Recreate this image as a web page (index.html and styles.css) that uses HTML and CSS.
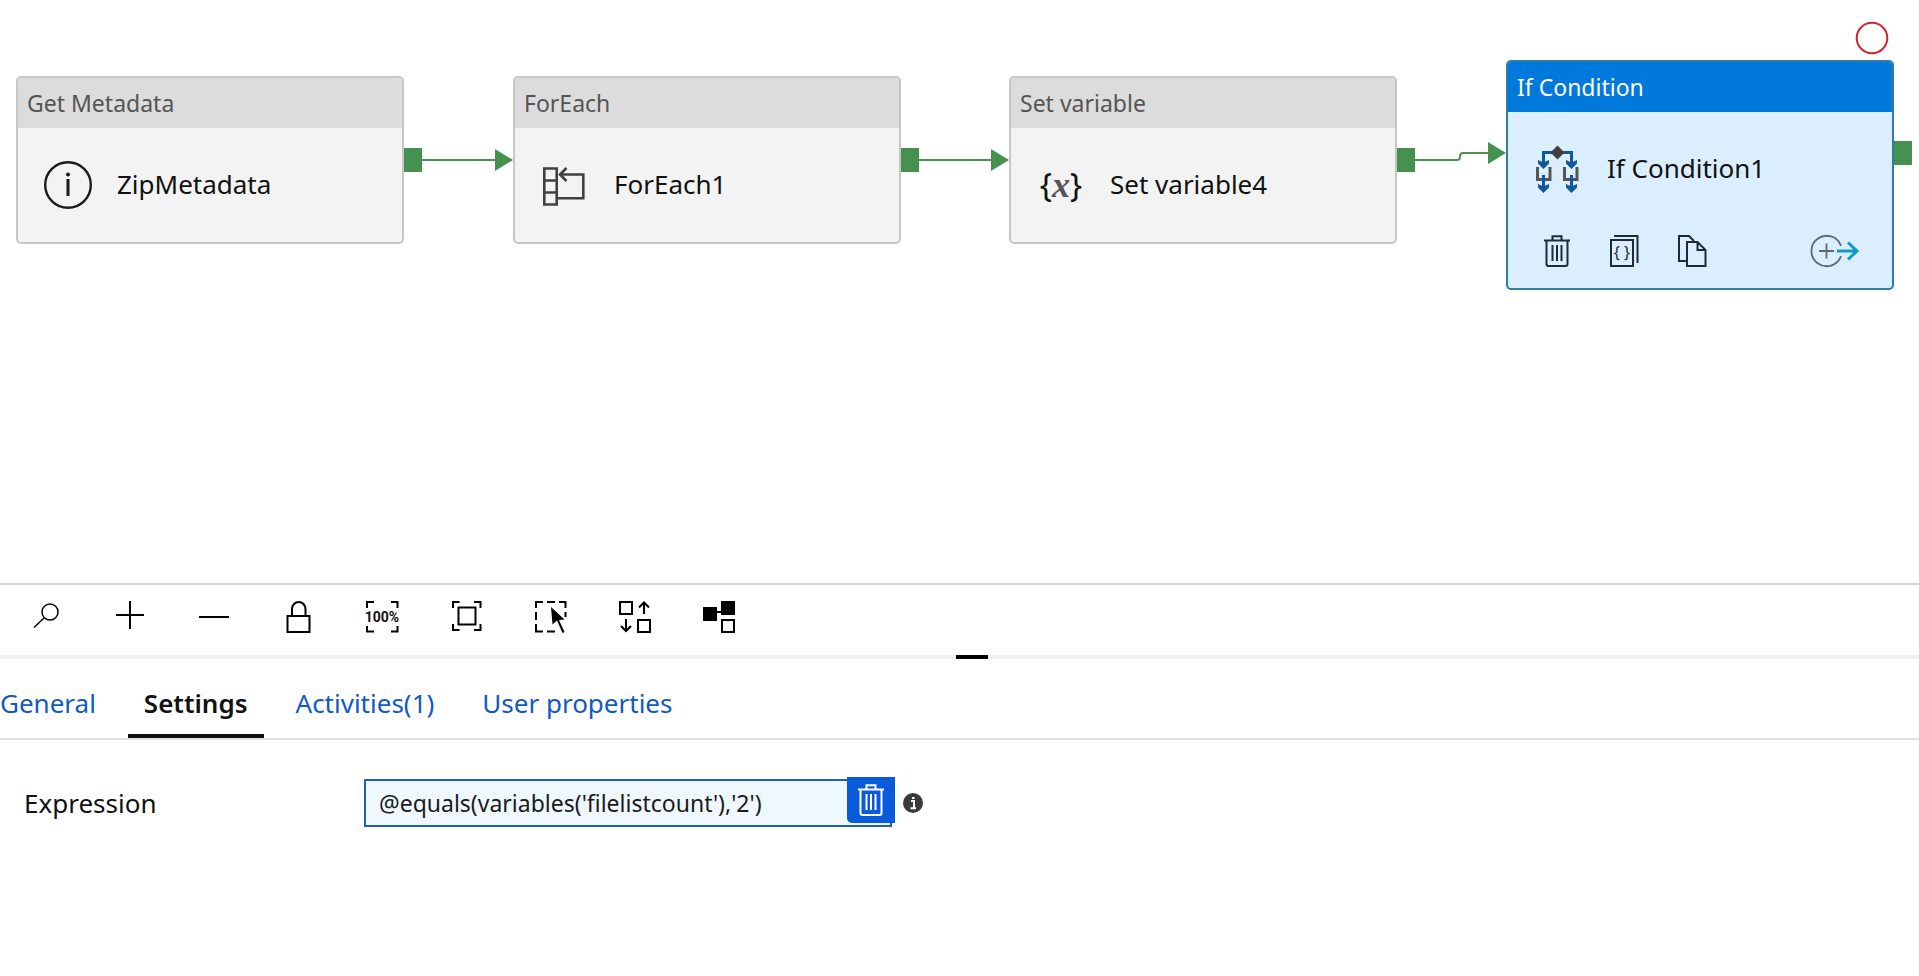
FILE: index.html
```html
<!DOCTYPE html>
<html lang="en">
<head>
<meta charset="utf-8">
<title>Pipeline designer</title>
<link rel="stylesheet" href="styles.css">
</head>
<body>
<main class="designer">
  <section class="canvas" aria-label="Pipeline canvas">
    <svg class="links" width="1919" height="300" aria-hidden="true">
      <g class="link-line">
        <path d="M422 160H496"/>
        <path d="M918 160H992"/>
        <path d="M1414 160H1457Q1460 160 1460 156.500T1463 153H1490"/>
      </g>
      <g class="link-shape">
        <path d="M404 148h18v24h-18zM901 148h18v24h-18zM1397 148h18v24h-18zM1894 141h18v24h-18z"/>
        <path d="M495 149l18 11-18 11zM991 149l18 11-18 11zM1488 142l18 11-18 11z"/>
      </g>
      <circle class="breakpoint" cx="1872" cy="38" r="15.300"/>
    </svg>

    <article class="node node-metadata">
      <header class="node-type">Get Metadata</header>
      <div class="node-body">
        <svg class="node-icon" width="48" height="48" viewBox="0 0 48 48" aria-hidden="true">
          <circle cx="24" cy="24" r="22.800" fill="none" stroke="#1b1b1b" stroke-width="2.400"/>
          <path d="M24 18v17" stroke="#1b1b1b" stroke-width="3"/>
          <circle cx="24" cy="13.500" r="2" fill="#1b1b1b"/>
        </svg>
        <span class="node-name">ZipMetadata</span>
      </div>
    </article>

    <article class="node node-foreach">
      <header class="node-type">ForEach</header>
      <div class="node-body">
        <svg class="node-icon" width="48" height="48" viewBox="1 0 48 48" fill="none" stroke="#404040" stroke-width="2.600" aria-hidden="true">
          <path d="M4.300 7.500h12.400v36H4.300zM4.300 19.500h12.400M4.300 31.500h12.400M18 37.300h25.300V13.500H20"/>
          <path d="M26.500 7L20 13.500l6.500 6.500"/>
        </svg>
        <span class="node-name">ForEach1</span>
      </div>
    </article>

    <article class="node node-variable">
      <header class="node-type">Set variable</header>
      <div class="node-body">
        <span class="node-icon variable-icon" aria-hidden="true">{<i>x</i>}</span>
        <span class="node-name">Set variable4</span>
      </div>
    </article>

    <article class="node node-if selected">
      <header class="node-type">If Condition</header>
      <div class="node-body">
        <svg class="node-icon" width="48" height="48" viewBox="2 0 48 48" fill="none" aria-hidden="true">
          <g stroke="#555" stroke-width="3">
            <path d="M5.500 22v12.500h12.500V22M32.500 22v12.500H45V22"/>
          </g>
          <g stroke="#11579b" stroke-width="3">
            <path d="M23 7.500H11.500V20M27 7.500h12.500V20M11.500 30v15M39.500 30v15"/>
          </g>
          <path d="M6 15l5.500 2.500L17 15v3.500L11.500 24 6 18.500zM34 15l5.500 2.500L45 15v3.500L39.500 24 34 18.500zM6 39l5.500 2.500L17 39v3.500L11.500 48 6 42.500zM34 39l5.500 2.500L45 39v3.500L39.500 48 34 42.500z" fill="#11579b"/>
          <path d="M25.500.500l7 7-7 7-7-7z" fill="#404040"/>
        </svg>
        <span class="node-name">If Condition1</span>
      </div>
      <div class="node-actions">
        <button class="icon-button" type="button" aria-label="Delete">
          <svg width="36" height="36" viewBox="0 0 36 36" fill="none" stroke="#1f2a33" stroke-width="2">
            <path d="M5 7.500h26M13.500 7V3.200h9V7M7.500 8v23q0 2 2 2h17q2 0 2-2V8M13.500 12v16M18 12v16M22.500 12v16"/>
          </svg>
        </button>
        <button class="icon-button" type="button" aria-label="View code">
          <svg width="36" height="36" viewBox="1 0 36 36" fill="none" stroke="#1f2a33" stroke-width="2">
            <path d="M5 7h22v26H5zM8 3h23.500v27"/>
            <text class="code-glyph" x="16" y="25" text-anchor="middle">{ }</text>
          </svg>
        </button>
        <button class="icon-button" type="button" aria-label="Clone">
          <svg width="36" height="36" viewBox="1 0 36 36" fill="none" stroke="#1f2a33" stroke-width="2">
            <path d="M13 28H5V3h10l5 5M13 9h10.500l8 8v16H13zM23.500 9v8h8"/>
          </svg>
        </button>
        <button class="icon-button add-output" type="button" aria-label="Add output">
          <svg width="52" height="36" viewBox="1 0 52 36" fill="none" stroke="#5b6875" stroke-width="1.800">
            <path d="M34 13A15.200 15.200 0 1 0 34 23M12 18h15M19.500 10.500v15"/>
            <path d="M30 18h20M41 9.500l9 8.500-9 8.500" stroke="#129bc2" stroke-width="3"/>
          </svg>
        </button>
      </div>
    </article>
  </section>

  <div class="toolbar" role="toolbar" aria-label="Canvas tools">
    <button class="tool" type="button" aria-label="Search"><svg class="tool-icon thin" viewBox="0 0 36 36"><circle cx="22" cy="13" r="8"/><path d="M16 19L6 28.500"/></svg></button>
    <button class="tool" type="button" aria-label="Zoom in"><svg class="tool-icon" viewBox="0 0 36 36"><path d="M4 16h28M18 2v28"/></svg></button>
    <button class="tool" type="button" aria-label="Zoom out"><svg class="tool-icon" viewBox="0 0 36 36"><path d="M3 18h30"/></svg></button>
    <button class="tool" type="button" aria-label="Lock canvas"><svg class="tool-icon" viewBox="0 0 36 36"><path d="M7.500 17h22v16h-22zM12 17V10a6.700 7 0 0 1 13.500 0v7"/></svg></button>
    <button class="tool" type="button" aria-label="Reset zoom to 100%"><svg class="tool-icon" viewBox="0 0 36 36"><path d="M3 9V3h7M27 3h6.500v6M3 27v5.500h7M27 32.500h6.500V27"/><text class="zoom-label" x="18" y="22.500" text-anchor="middle">100%</text></svg></button>
    <button class="tool" type="button" aria-label="Zoom to fit"><svg class="tool-icon" viewBox="0 0 36 36"><path d="M5 9V3h6.500M26 3h6.500v6M5 25v6h6.500M26 31h6.500v-6"/><path d="M10.500 8.500h17v17h-17z"/></svg></button>
    <button class="tool" type="button" aria-label="Select area"><svg class="tool-icon" viewBox="0 0 36 36"><path d="M4 9V3h7M15 3h8M27 3h6.500v6M4 13v8M4 25v7.500h7M15 32.500h8M33.500 13v5"/><path class="solid" d="M19 8l1.500 17.500 4.500-4 5.500 12.500 2-1-5.500-12 5.500-.500z"/></svg></button>
    <button class="tool" type="button" aria-label="Auto align"><svg class="tool-icon" viewBox="0 0 36 36"><path d="M4 3h12v12H4zM22 21h12v12H22zM28 15V4M23 8.500L28 3.500l5 5M10 20v12M5 27l5 5 5-5"/></svg></button>
    <button class="tool" type="button" aria-label="Show lineage"><svg class="tool-icon" viewBox="0 0 36 36"><path class="solid" d="M3 8h14v14H3zM21 2h14v14H21z"/><path d="M17 13h5M22 21h12v12H22z"/></svg></button>
  </div>
  <div class="splitter" role="separator"><span class="splitter-grip"></span></div>

  <section class="panel">
    <nav class="tabs">
      <a class="tab" href="#general">General</a>
      <a class="tab active" href="#settings" aria-current="page">Settings</a>
      <a class="tab" href="#activities">Activities(1)</a>
      <a class="tab" href="#properties">User properties</a>
    </nav>
    <form class="settings">
      <label class="field-label" for="expression">Expression</label>
      <div class="field">
        <input class="field-input" id="expression" type="text" value="@equals(variables('filelistcount'),'2')">
        <button class="field-delete" type="button" aria-label="Delete expression">
          <svg width="36" height="36" viewBox="0 0 36 36" fill="none" stroke="#fff" stroke-width="2">
            <path d="M5 7.500h26M13.500 7V3.200h9V7M7.500 8v23q0 2 2 2h17q2 0 2-2V8M13.500 12v16M18 12v16M22.500 12v16"/>
          </svg>
        </button>
      </div>
      <svg class="hint" width="20" height="20" viewBox="0 0 20 20" role="img" aria-label="Information">
        <circle cx="10" cy="10" r="10" fill="#3a3a3a"/>
        <path d="M8 8h3v7M7.500 15.200h5.500M9 5h2.500" fill="none" stroke="#fff" stroke-width="2"/>
      </svg>
    </form>
  </section>
</main>
</body>
</html>
```

FILE: styles.css
```css
* {
  box-sizing: border-box;
}

body {
  margin: 0;
  background: #fff;
  color: #111;
  font-family: "Noto Sans", "Open Sans", sans-serif;
  font-size: 26px;
}

button {
  padding: 0;
  border: 0;
  background: none;
  color: inherit;
  font: inherit;
  cursor: pointer;
}

.designer {
  display: flex;
  flex-direction: column;
  min-height: 100vh;
  overflow: hidden;
}

/* Canvas */
.canvas {
  position: relative;
  height: 583px;
}

.links {
  position: absolute;
  top: 0;
  left: 0;
}

.link-line {
  fill: none;
  stroke: #4a9154;
  stroke-width: 2;
}

.link-shape {
  fill: #479150;
}

.breakpoint {
  fill: #fff;
  stroke: #cf2430;
  stroke-width: 2;
}

.node {
  position: absolute;
  top: 76px;
  width: 388px;
  overflow: hidden;
  border: 2px solid #c6c6c6;
  border-radius: 5px;
  background: #f3f3f3;
}

.node-metadata { left: 16px; }
.node-foreach { left: 513px; }
.node-variable { left: 1009px; }
.node-if { left: 1506px; }

.node-type {
  height: 50px;
  padding: 0 9px;
  background: #dcdcdc;
  color: #555;
  font-size: 23px;
  line-height: 50px;
}

.node-body {
  display: flex;
  align-items: center;
  gap: 25px;
  height: 114px;
  padding: 0 26px;
}

.node-icon {
  flex: none;
  width: 48px;
}

.node-name {
  padding-bottom: 2px;
  white-space: nowrap;
}

.variable-icon {
  padding-bottom: 2px;
  color: #111;
  font-size: 32px;
  text-align: center;
}

.variable-icon i {
  color: #555;
  font-family: "Liberation Serif", serif;
  font-weight: bold;
  font-size: 36px;
}

.selected {
  top: 60px;
  border-color: #2d7fa0;
  background: #dbeeff;
}

.selected .node-type {
  background: #0078dc;
  color: #fff;
}

.node-actions {
  display: flex;
  gap: 32px;
  height: 62px;
  padding: 7px 32px 0 31px;
}

.icon-button {
  height: 36px;
}

.icon-button svg {
  display: block;
}

.add-output {
  margin-left: auto;
}

.code-glyph {
  fill: #1f2a33;
  stroke: none;
  font-size: 16px;
}

/* Toolbar */
.toolbar {
  display: flex;
  height: 72px;
  padding-left: 4px;
  border-top: 2px solid #d6d6d6;
}

.tool {
  display: flex;
  align-items: center;
  justify-content: center;
  width: 84px;
  height: 64px;
}

.tool-icon {
  width: 36px;
  height: 36px;
  fill: none;
  stroke: #000;
  stroke-width: 2;
}

.thin {
  stroke-width: 1.5;
}

.solid {
  fill: #000;
  stroke: none;
}

.zoom-label {
  fill: #111;
  stroke: none;
  font-family: Roboto, sans-serif;
  font-size: 14px;
  font-weight: 700;
}

.splitter {
  display: flex;
  justify-content: center;
  height: 4px;
  padding-left: 24px;
  background: #eee;
}

.splitter-grip {
  width: 32px;
  background: #000;
}

/* Properties panel */
.tabs {
  display: flex;
  gap: 16px;
  height: 81px;
  border-bottom: 2px solid #e0e0e0;
}

.tab {
  padding: 24px 16px 0;
  border-bottom: 4px solid transparent;
  color: #1059c4;
  line-height: 40px;
  text-decoration: none;
}

.tab:first-child {
  padding-left: 0;
}

.active {
  border-color: #111;
  color: #111;
  font-weight: 600;
}

.settings {
  display: flex;
  align-items: center;
  padding: 39px 24px;
}

.field-label {
  width: 340px;
}

.field {
  position: relative;
  width: 528px;
}

.field-input {
  display: block;
  width: 100%;
  height: 48px;
  padding: 0 56px 0 13px;
  border: 2px solid #1f62ad;
  background: #eff8ff;
  color: #1b1b1b;
  font: inherit;
  font-size: 23px;
}

.field-delete {
  position: absolute;
  top: -2px;
  right: -3px;
  display: flex;
  align-items: center;
  justify-content: center;
  width: 48px;
  height: 46px;
  border-radius: 0 0 0 5px;
  background: #0a5bdb;
}

.hint {
  margin-left: 11px;
}
```
